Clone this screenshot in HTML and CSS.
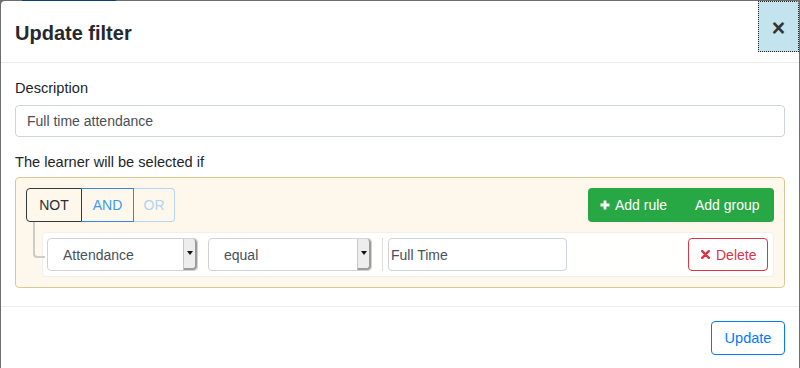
FILE: index.html
```html
<!DOCTYPE html>
<html lang="en">
<head>
<meta charset="utf-8">
<title>Update filter</title>
<link rel="stylesheet" href="styles.css">
</head>
<body>
<div class="backdrop-top"><span class="nav-accent"></span></div>
<div class="modal">
  <div class="modal-header">
    <h5 class="modal-title">Update filter</h5>
    <button class="close" type="button">×</button>
  </div>
  <div class="modal-body">
    <label class="label label-desc">Description</label>
    <input class="form-control" type="text" value="Full time attendance">
    <label class="label label-rules">The learner will be selected if</label>
    <div class="rules-group">
      <div class="group-header">
        <div class="btn-group conditions">
          <button class="btn btn-not" type="button">NOT</button>
          <button class="btn btn-and" type="button">AND</button>
          <button class="btn btn-or" type="button">OR</button>
        </div>
        <div class="btn-group actions">
          <button class="btn btn-success btn-add-rule" type="button"><svg class="icon-plus" width="10" height="10" viewBox="0 0 10 10"><path d="M5 0.5V9.5M0.5 5H9.5" stroke="#fff" stroke-width="2.8" fill="none"/></svg>Add rule</button>
          <button class="btn btn-success btn-add-group" type="button">Add group</button>
        </div>
      </div>
      <div class="rule">
        <div class="select select-filter"><span class="select-text">Attendance</span><span class="caret-box"><span class="caret"></span></span></div>
        <div class="select select-op"><span class="select-text">equal</span><span class="caret-box"><span class="caret"></span></span></div>
        <div class="value-container"><input class="value-input" type="text" value="Full Time"></div>
        <button class="btn btn-delete" type="button"><svg class="icon-times" width="9" height="9" viewBox="0 0 9 9"><path d="M1.2 1.2L7.8 7.8M7.8 1.2L1.2 7.8" stroke="#dc3545" stroke-width="2.4" fill="none" stroke-linecap="round"/></svg>Delete</button>
      </div>
    </div>
  </div>
  <div class="modal-footer">
    <button class="btn btn-update" type="button">Update</button>
  </div>
</div>
</body>
</html>
```
FILE: styles.css
```css
* { box-sizing: border-box; }
html, body { margin: 0; padding: 0; }
body {
  width: 800px;
  height: 368px;
  overflow: hidden;
  background: #6e6e6e;
  font-family: "Liberation Sans", Arial, sans-serif;
  color: #212529;
}
.backdrop-top {
  height: 1px;
  display: flex;
}
.nav-accent {
  display: block;
  margin-left: 22px;
  width: 94px;
  height: 1px;
  background: #0b3f7f;
}
.modal {
  margin: 0 1px;
  height: 367px;
  background: #fff;
  border-radius: 4px 4px 0 0;
  overflow: hidden;
}
.modal-header {
  display: flex;
  align-items: flex-start;
  padding: 17px 0 14px 14px;
  border-bottom: 1px solid #e9ecef;
}
.modal-title {
  margin: 0;
  font-size: 20px;
  line-height: 30px;
  font-weight: 700;
  color: #25292d;
}
.close {
  margin: -17px 0 -14px auto;
  width: 41px;
  height: 51px;
  padding: 4px 0 0;
  border: none;
  outline: 1px dotted #222;
  outline-offset: -1px;
  background: #c3e3ef;
  color: #333;
  font-family: "Liberation Sans", Arial, sans-serif;
  font-size: 23px;
  font-weight: 700;
  line-height: 1;
  display: flex;
  align-items: center;
  justify-content: center;
}
.modal-body {
  padding: 15px 14px 18px;
}
.label {
  display: block;
  font-size: 14.6px;
  line-height: 21px;
  color: #212529;
}
.label-desc { margin-bottom: 6px; }
.label-rules { margin-bottom: 4px; }
.form-control {
  display: block;
  width: 100%;
  height: 32px;
  padding: 0 11px;
  border: 1px solid #ced4da;
  border-radius: 4px;
  font-family: "Liberation Sans", Arial, sans-serif;
  font-size: 14px;
  color: #495057;
  background: #fff;
  margin-bottom: 15px;
}
.rules-group {
  background: #fdf8eb;
  border: 1px solid #dcc896;
  border-radius: 4px;
  padding: 10px;
}
.group-header {
  display: flex;
  justify-content: space-between;
  margin-bottom: 10px;
}
.btn-group {
  display: flex;
}
.btn {
  font-family: "Liberation Sans", Arial, sans-serif;
  font-size: 14px;
  height: 34px;
  padding: 0 11px;
  background: transparent;
  border: 1px solid transparent;
  display: flex;
  align-items: center;
  line-height: 1;
}
.btn-not {
  width: 56px;
  justify-content: center;
  border-color: #343a40;
  color: #2b2f33;
  border-radius: 4px 0 0 4px;
}
.btn-and {
  width: 52px;
  justify-content: center;
  border-color: #3585e6;
  border-left: none;
  color: #3f98f5;
}
.btn-or {
  width: 41px;
  justify-content: center;
  border-color: #b7d6f6;
  border-left: none;
  color: #b1d3f4;
  border-radius: 0 4px 4px 0;
}
.btn-success {
  background: #28a745;
  border: none;
  color: #fff;
}
.btn-add-rule {
  width: 93px;
  padding-left: 12px;
  border-radius: 4px 0 0 4px;
}
.btn-add-group {
  width: 93px;
  padding-left: 14px;
  border-radius: 0 4px 4px 0;
}
.icon-plus {
  margin-right: 5px;
  flex: none;
}
.rule {
  position: relative;
  margin-left: 16px;
  display: flex;
  align-items: center;
  padding: 5px 5px 5px 4px;
  background: rgba(255, 255, 255, 0.9);
  border: 1px solid #f0f0f0;
  border-radius: 4px;
}
.rule::before {
  content: "";
  position: absolute;
  left: -10px;
  top: -11px;
  width: 10px;
  height: 34px;
  border-left: 2px solid #ccc;
  border-bottom: 2px solid #ccc;
  border-radius: 0 0 0 4px;
}
.select {
  display: flex;
  align-items: stretch;
  height: 33px;
  border: 1px solid #cfd3d8;
  border-radius: 4px;
  background: #fff;
  font-size: 14px;
  color: #495057;
}
.select-filter { width: 151px; }
.select-op { width: 164px; margin-left: 10px; }
.select-text {
  flex: 1;
  display: flex;
  align-items: center;
  padding-left: 15px;
}
.caret-box {
  width: 14px;
  background: #ededed;
  border-left: 1px solid #c9c9c9;
  border-right: 2px solid #9c9c9c;
  border-bottom: 2px solid #9c9c9c;
  border-radius: 0 4px 4px 0;
  display: flex;
  justify-content: center;
  padding-top: 12px;
}
.caret {
  width: 0;
  height: 0;
  border-left: 3.5px solid transparent;
  border-right: 3.5px solid transparent;
  border-top: 4px solid #111;
}
.value-container {
  margin-left: 10px;
  border-left: 1px solid #ddd;
  padding-left: 5px;
  display: flex;
}
.value-input {
  width: 179px;
  height: 33px;
  border: 1px solid #ced4da;
  border-radius: 4px;
  padding: 0 2px;
  font-family: "Liberation Sans", Arial, sans-serif;
  font-size: 14px;
  color: #495057;
}
.btn-delete {
  margin-left: auto;
  height: 33px;
  width: 80px;
  padding-left: 12px;
  border-color: #dc3545;
  border-radius: 4px;
  color: #dc3545;
  background: #fff;
}
.icon-times {
  margin-right: 6px;
  flex: none;
}
.modal-footer {
  border-top: 1px solid #e9ecef;
  padding: 14px 14px 0;
  display: flex;
  justify-content: flex-end;
}
.btn-update {
  width: 74px;
  justify-content: center;
  border-color: #007bff;
  border-radius: 4px;
  color: #007bff;
  font-size: 14.5px;
}
```
